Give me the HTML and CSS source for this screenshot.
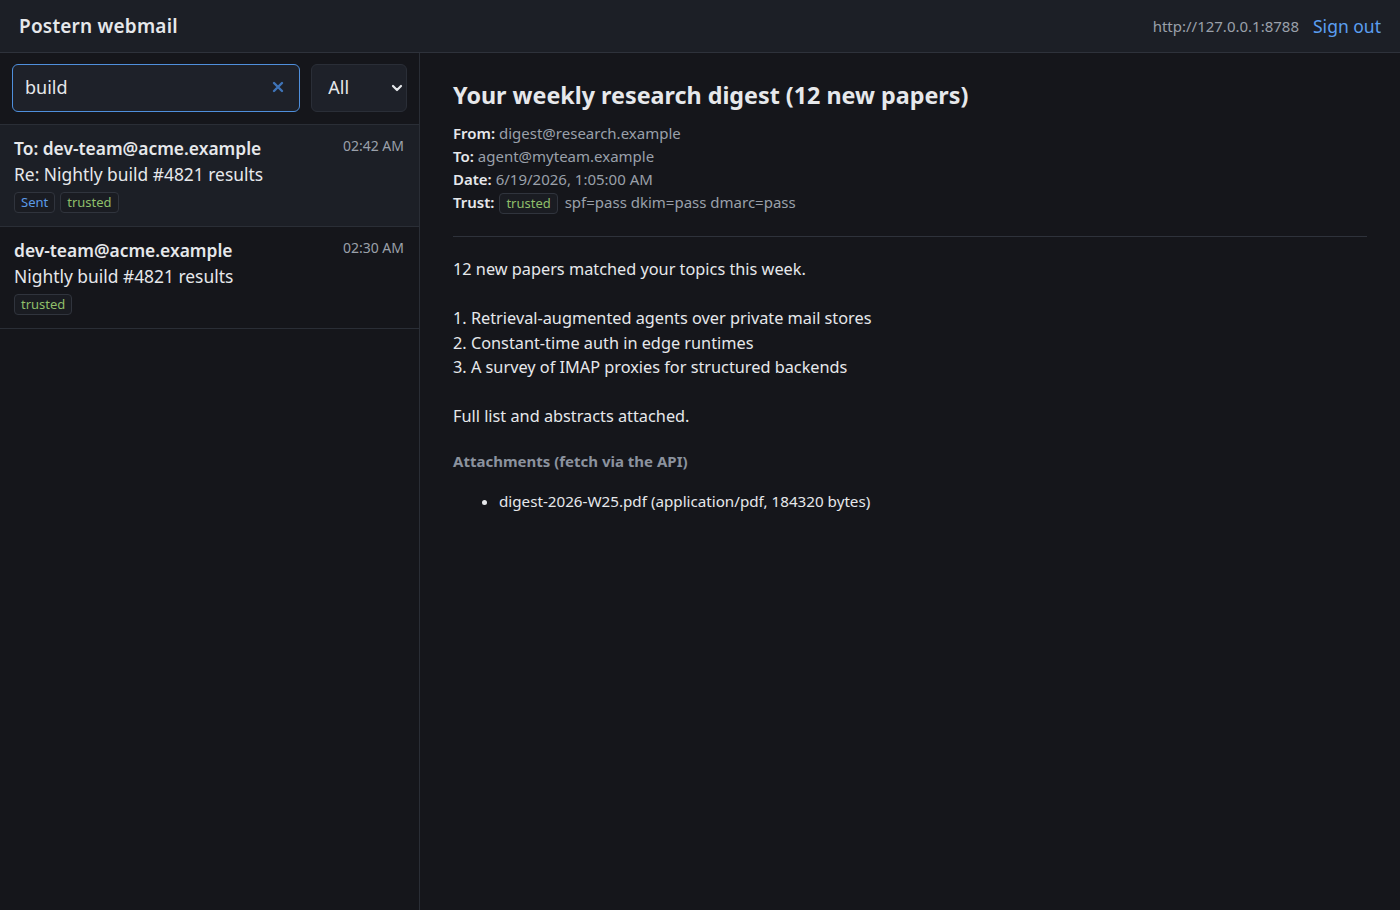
FILE: index.html
```html
<!DOCTYPE html>
<html>
<head>
<meta charset="utf-8">
<link rel="stylesheet" href="styles.css">
</head>
<body>
<header class="topbar">
  <div class="brand">Postern webmail</div>
  <div class="top-right">
    <span class="host">http://127.0.0.1:8788</span>
    <a class="signout" href="#">Sign out</a>
  </div>
</header>
<div class="layout">
  <aside class="sidebar">
    <div class="search-row">
      <div class="search-box">
        <input class="search-input" type="text" value="build">
        <svg class="clear" width="12" height="12" viewBox="0 0 12 12"><path d="M2 2 L10 10 M10 2 L2 10" stroke="#3f74b8" stroke-width="2.4" stroke-linecap="round"/></svg>
      </div>
      <div class="select-box">
        <select class="filter"><option>All</option></select>
        <svg class="chev" width="12" height="8" viewBox="0 0 12 8"><path d="M2 2 L6 6 L10 2" fill="none" stroke="#e6e8eb" stroke-width="2.2" stroke-linecap="round" stroke-linejoin="round"/></svg>
      </div>
    </div>
    <div class="msg selected">
      <div class="msg-top">
        <div class="msg-from">To: dev-team@acme.example</div>
        <div class="msg-time">02:42 AM</div>
      </div>
      <div class="msg-subj">Re: Nightly build #4821 results</div>
      <div class="tags"><span class="tag tag-blue">Sent</span><span class="tag tag-green">trusted</span></div>
    </div>
    <div class="msg">
      <div class="msg-top">
        <div class="msg-from">dev-team@acme.example</div>
        <div class="msg-time">02:30 AM</div>
      </div>
      <div class="msg-subj">Nightly build #4821 results</div>
      <div class="tags"><span class="tag tag-green">trusted</span></div>
    </div>
  </aside>
  <main class="reader">
    <h1 class="subject">Your weekly research digest (12 new papers)</h1>
    <div class="meta">
      <div class="meta-line"><b>From:</b> digest@research.example</div>
      <div class="meta-line"><b>To:</b> agent@myteam.example</div>
      <div class="meta-line"><b>Date:</b> 6/19/2026, 1:05:00 AM</div>
      <div class="meta-line"><b>Trust:</b> <span class="tag tag-green">trusted</span> <span class="auth">spf=pass dkim=pass dmarc=pass</span></div>
    </div>
    <hr class="divider">
    <div class="body">12 new papers matched your topics this week.

1. Retrieval-augmented agents over private mail stores
2. Constant-time auth in edge runtimes
3. A survey of IMAP proxies for structured backends

Full list and abstracts attached.</div>
    <div class="att-title">Attachments (fetch via the API)</div>
    <ul class="att-list">
      <li>digest-2026-W25.pdf (application/pdf, 184320 bytes)</li>
    </ul>
  </main>
</div>
</body>
</html>
```
FILE: styles.css
```css
* { box-sizing: border-box; }
html, body { margin: 0; height: 100%; }
body {
  font-family: "Noto Sans", "Open Sans", sans-serif;
  background: #15161b;
  color: #e6e8eb;
  overflow: hidden;
}
.topbar {
  height: 53px;
  background: #1c1f26;
  border-bottom: 1px solid #2e323b;
  display: flex;
  align-items: center;
  justify-content: space-between;
  padding: 0 19px 0 19px;
}
.brand { font-size: 19px; font-weight: 600; letter-spacing: 0.2px; }
.top-right { display: flex; align-items: center; gap: 14px; }
.host { font-size: 15px; color: #9aa0aa; }
.signout { font-size: 17.5px; color: #5b9ef0; text-decoration: none; }
.layout { display: flex; height: calc(100% - 53px); }
.sidebar {
  width: 420px;
  flex: none;
  border-right: 1px solid #2a2e36;
  background: #15161b;
}
.search-row {
  display: flex;
  gap: 11px;
  padding: 11px 12px 12px 12px;
  border-bottom: 1px solid #2a2e36;
}
.search-box { position: relative; width: 289px; }
.search-input {
  width: 100%;
  height: 48px;
  background: #1e2129;
  border: 1px solid #4f8fdc;
  border-radius: 6px;
  color: #e6e8eb;
  font-family: inherit;
  font-size: 18px;
  padding: 0 12px 2px 12px;
  outline: none;
}
.clear { position: absolute; right: 16px; top: 17px; }
.select-box { position: relative; width: 96px; }
.filter {
  appearance: none;
  -webkit-appearance: none;
  width: 100%;
  height: 48px;
  background: #1e2129;
  border: 1px solid #2a2e37;
  border-radius: 6px;
  color: #e6e8eb;
  font-family: inherit;
  font-size: 18px;
  padding: 0 16px 2px 16px;
}
.chev { position: absolute; right: 4px; top: 20px; }
.msg {
  padding: 10px 15px 13px 14px;
  border-bottom: 1px solid #2a2e36;
}
.msg.selected { background: #1c1f26; }
.msg-top { display: flex; justify-content: space-between; align-items: flex-start; }
.msg-from { font-size: 17.4px; font-weight: 600; line-height: 26px; }
.msg-time { font-size: 14px; color: #9aa0aa; line-height: 22px; }
.msg-subj { font-size: 17.4px; line-height: 26px; }
.tags { display: flex; gap: 5px; margin-top: 5px; }
.tag {
  display: inline-block;
  font-size: 13px;
  line-height: 19px;
  padding: 0 6px;
  border: 1px solid #30343d;
  border-radius: 4px;
  background: #1a1c22;
}
.tag-blue { color: #5a9ae6; }
.tag-green { color: #8fbf6a; }
.reader {
  flex: 1;
  padding: 26px 33px;
}
.subject {
  margin: 0;
  font-size: 23.3px;
  font-weight: 700;
  line-height: 32px;
}
.meta { margin-top: 11px; font-size: 15px; color: #9aa0aa; }
.meta-line { line-height: 23px; }
.meta-line b { color: #e6e8eb; font-weight: 600; }
.meta .tag { margin: 0 3px 0 1px; vertical-align: 0px; }
.divider {
  border: 0;
  border-top: 1px solid #2e323b;
  margin: 22px 0 20px 0;
}
.body {
  white-space: pre-wrap;
  font-size: 16.3px;
  line-height: 24.5px;
}
.att-title {
  margin-top: 21px;
  font-size: 15px;
  font-weight: 700;
  color: #8b929e;
  line-height: 22px;
}
.att-list {
  margin: 17px 0 0 0;
  padding-left: 46px;
  font-size: 15.2px;
  line-height: 24px;
}
```
